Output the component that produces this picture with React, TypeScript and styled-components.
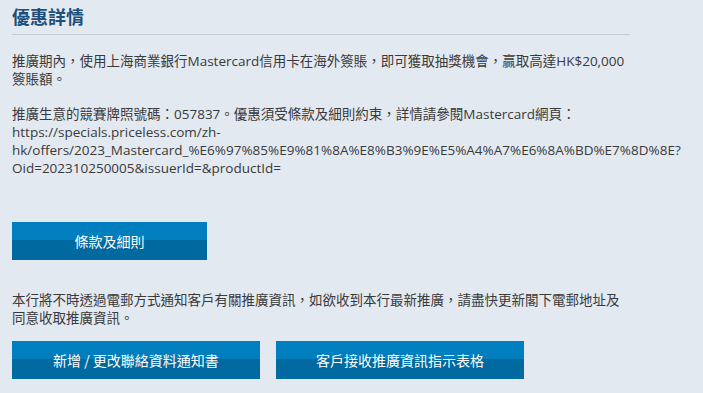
import React from 'react';
import styled, { createGlobalStyle } from 'styled-components';

const GlobalStyle = createGlobalStyle`
  html, body {
    margin: 0;
    padding: 0;
    background: #e3e9f1;
    overflow: hidden;
  }
  body {
    font-family: "Open Sans", "Noto Sans CJK TC", sans-serif;
  }
`;

const Page = styled.div`
  width: 618px;
  padding: 4px 0 0 12px;
  color: #3a3a3a;
  font-size: 13.5px;
  line-height: 18px;
`;

const Title = styled.h2`
  margin: 0;
  padding-bottom: 6px;
  font-family: "Noto Sans CJK TC", sans-serif;
  font-size: 18px;
  font-weight: 700;
  line-height: 24px;
  color: #1d4f7a;
  border-bottom: 1px solid #c3cdd9;
`;

const Para = styled.p<{ $top: number }>`
  margin: ${(p) => p.$top}px 0 0;
  white-space: normal;
`;

const ButtonRow = styled.div<{ $top: number }>`
  display: flex;
  gap: 16px;
  margin-top: ${(p) => p.$top}px;
`;

const ActionButton = styled.button<{ $width: number }>`
  width: ${(p) => p.$width}px;
  height: 38px;
  border: 0;
  padding: 0;
  color: #ffffff;
  font-family: "Noto Sans CJK TC", sans-serif;
  font-size: 14px;
  background: linear-gradient(to bottom, #007ebd 0, #007ebd 18px, #00699f 18px, #00699f 100%);
  cursor: pointer;
`;

const App = () => {
  return (
    <Page>
      <GlobalStyle />
      <Title>優惠詳情</Title>
      <Para $top={17}>
        推廣期內，使用上海商業銀行Mastercard信用卡在海外簽賬，即可獲取抽獎機會，贏取高達HK$20,000簽賬額。
      </Para>
      <Para $top={17}>
        推廣生意的競賽牌照號碼：057837。優惠須受條款及細則約束，詳情請參閱Mastercard網頁：
        https://specials.priceless.com/zh-hk/offers/2023_Mastercard_%E6%97%85%E9%81%8A%E8%B3%9E%E5%A4%A7%E6%8A%BD%E7%8D%8E?Oid=202310250005&amp;issuerId=&amp;productId=
      </Para>
      <ButtonRow $top={45}>
        <ActionButton $width={195}>條款及細則</ActionButton>
      </ButtonRow>
      <Para $top={31}>
        本行將不時透過電郵方式通知客戶有關推廣資訊，如欲收到本行最新推廣，請盡快更新閣下電郵地址及同意收取推廣資訊。
      </Para>
      <ButtonRow $top={14}>
        <ActionButton $width={248}>新增 / 更改聯絡資料通知書</ActionButton>
        <ActionButton $width={248}>客戶接收推廣資訊指示表格</ActionButton>
      </ButtonRow>
    </Page>
  );
};

export default App;
